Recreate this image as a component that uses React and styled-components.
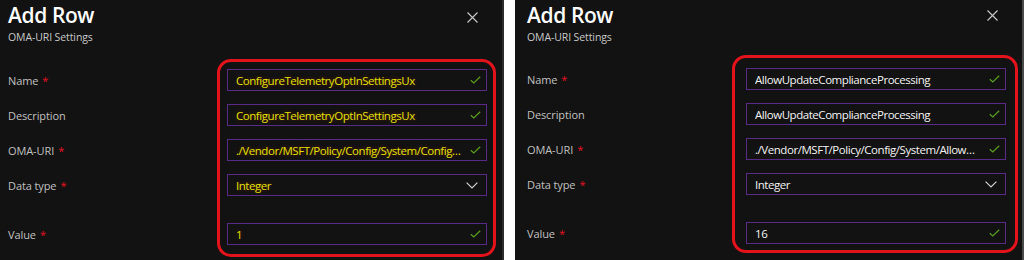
import React from "react";
import styled, { createGlobalStyle } from "styled-components";

const GlobalStyle = createGlobalStyle`
  html, body { margin: 0; padding: 0; background: #ffffff; }
  body { font-family: "Open Sans", "Noto Sans", sans-serif; }
`;

const Page = styled.div`
  display: flex;
  gap: 11px;
  width: 1024px;
  height: 260px;
  overflow: hidden;
`;

const Panel = styled.section`
  position: relative;
  box-sizing: border-box;
  width: ${(p) => p.$width}px;
  flex: none;
  height: 260px;
  background: #121212;
  border-right: 2px solid ${(p) => p.$edge};
  padding-left: ${(p) => p.$padLeft}px;
  overflow: hidden;
`;

const Header = styled.header`
  display: flex;
  justify-content: space-between;
  align-items: flex-start;
  padding-right: 24px;
`;

const TitleBlock = styled.div`
  display: flex;
  flex-direction: column;
`;

const Title = styled.h1`
  margin: 0;
  font-size: 21px;
  letter-spacing: -0.4px;
  line-height: 30px;
  font-weight: 600;
  color: #ffffff;
`;

const Subtitle = styled.div`
  font-size: 10.5px;
  letter-spacing: -0.1px;
  line-height: 14px;
  color: #c8c8c8;
`;

const CloseButton = styled.button`
  all: unset;
  display: flex;
  margin-top: ${(p) => p.$top}px;
  width: 11px;
  height: 11px;
`;

const Form = styled.div`
  display: flex;
  flex-direction: column;
  gap: 13px;
  margin-top: ${(p) => p.$top}px;
`;

const FieldRow = styled.div`
  display: grid;
  grid-template-columns: 219px 260px;
  align-items: center;
  margin-top: ${(p) => p.$extra || 0}px;
`;

const Label = styled.label`
  font-size: 11px;
  letter-spacing: -0.1px;
  color: #c0c0c0;
`;

const Star = styled.span`
  color: #e81123;
  margin-left: 4px;
`;

const InputBox = styled.div`
  box-sizing: border-box;
  height: 22px;
  border: 1px solid #5a2b86;
  display: flex;
  align-items: center;
  gap: 4px;
  padding: 0 ${(p) => (p.$select ? 8 : 5)}px 0 8px;
`;

const InputText = styled.span`
  flex: 1;
  min-width: 0;
  overflow: hidden;
  white-space: nowrap;
  text-overflow: ellipsis;
  font-size: 11.5px;
  letter-spacing: -0.45px;
  color: ${(p) => p.$tone};
  text-shadow: ${(p) => p.$glow};
`;

const Highlight = styled.div`
  position: absolute;
  box-sizing: border-box;
  left: ${(p) => p.$left}px;
  top: ${(p) => p.$top}px;
  width: ${(p) => p.$w}px;
  height: ${(p) => p.$h}px;
  border: 3px solid #e3131c;
  border-radius: 14px;
  pointer-events: none;
`;

const Check = () => (
  <svg width="11" height="8" viewBox="0 0 11 8" fill="none">
    <path d="M0.8 4.2 L3.8 7 L10.2 0.8" stroke="#5a9e1c" strokeWidth="1.2" />
  </svg>
);

const Chevron = () => (
  <svg width="12" height="7" viewBox="0 0 12 7" fill="none">
    <path d="M0.6 0.6 L6 6 L11.4 0.6" stroke="#d0d0d0" strokeWidth="1.2" />
  </svg>
);

const CloseIcon = () => (
  <svg width="11" height="11" viewBox="0 0 11 11" fill="none">
    <path d="M0.5 0.5 L10.5 10.5 M10.5 0.5 L0.5 10.5" stroke="#c4c4c4" strokeWidth="1.2" />
  </svg>
);

const Field = ({ label, required, value, tone, glow, select, extra }) => (
  <FieldRow $extra={extra}>
    <Label>
      {label}
      {required && <Star>*</Star>}
    </Label>
    <InputBox $select={select}>
      <InputText $tone={tone} $glow={glow}>{value}</InputText>
      {select ? <Chevron /> : <Check />}
    </InputBox>
  </FieldRow>
);

const RowPanel = ({ width, padLeft, edge, closeTop, formTop, tone, glow, fields, box }) => (
  <Panel $width={width} $padLeft={padLeft} $edge={edge}>
    <Header>
      <TitleBlock>
        <Title>Add Row</Title>
        <Subtitle>OMA-URI Settings</Subtitle>
      </TitleBlock>
      <CloseButton $top={closeTop} aria-label="Close">
        <CloseIcon />
      </CloseButton>
    </Header>
    <Form $top={formTop}>
      <Field label="Name" required value={fields.name} tone={tone} glow={glow} />
      <Field label="Description" value={fields.description} tone={tone} glow={glow} />
      <Field label="OMA-URI" required value={fields.uri} tone={tone} glow={glow} />
      <Field label="Data type" required value="Integer" tone={tone} glow={glow} select />
      <Field label="Value" required value={fields.value} tone={tone} glow={glow} extra={14} />
    </Form>
    <Highlight $left={box.left} $top={box.top} $w={box.w} $h={box.h} />
  </Panel>
);

export default function App() {
  return (
    <>
      <GlobalStyle />
      <Page>
        <RowPanel
          width={504}
          padLeft={8}
          edge="#2c2c2c"
          closeTop={12}
          formTop={25}
          tone="#e2e200"
          glow="0 0 4px rgba(120, 36, 0, 0.9)"
          fields={{
            name: "ConfigureTelemetryOptInSettingsUx",
            description: "ConfigureTelemetryOptInSettingsUx",
            uri: "./Vendor/MSFT/Policy/Config/System/Config…",
            value: "1",
          }}
          box={{ left: 217, top: 59, w: 279, h: 198 }}
        />
        <RowPanel
          width={509}
          padLeft={12}
          edge="#4a4a4a"
          closeTop={10}
          formTop={24}
          tone="#f2f2f2"
          glow="none"
          fields={{
            name: "AllowUpdateComplianceProcessing",
            description: "AllowUpdateComplianceProcessing",
            uri: "./Vendor/MSFT/Policy/Config/System/Allow…",
            value: "16",
          }}
          box={{ left: 217, top: 55, w: 286, h: 198 }}
        />
      </Page>
    </>
  );
}
